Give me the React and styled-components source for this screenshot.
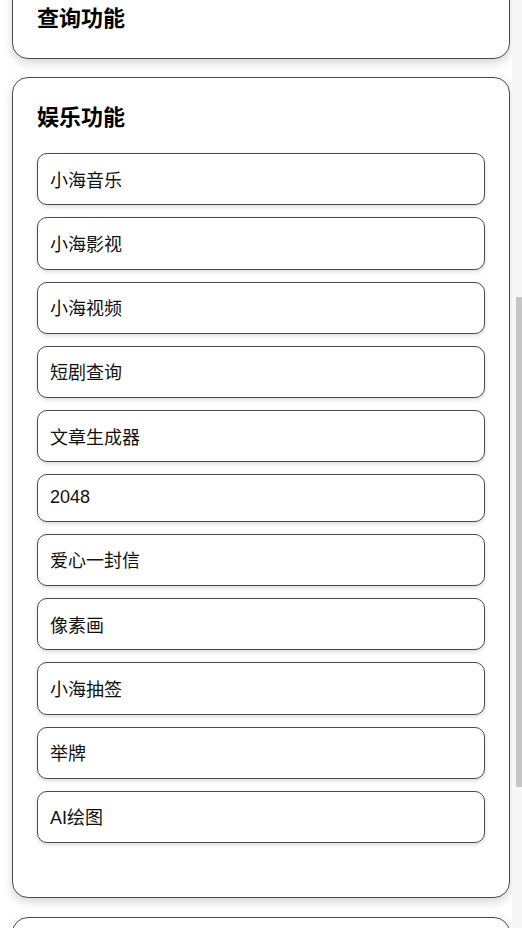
import React from "react";
import styled, { createGlobalStyle } from "styled-components";

const GlobalStyle = createGlobalStyle`
  html, body {
    margin: 0;
    padding: 0;
    background: #ffffff;
    overflow: hidden;
  }
  body {
    font-family: "Liberation Sans", "Noto Sans CJK SC", sans-serif;
    color: #111111;
  }
`;

const Viewport = styled.div`
  position: relative;
  width: 522px;
  height: 928px;
  overflow: hidden;
`;

const Page = styled.main`
  display: flex;
  flex-direction: column;
  gap: 18.5px;
  padding: 0 12px;
  margin-top: -22px;
`;

const Card = styled.section`
  background: #ffffff;
  border: 1px solid #4a4a4a;
  border-radius: 16px;
  padding: 25px 24px ${(p) => (p.$list ? "54px" : "23.5px")};
  box-shadow: 0 4px 10px rgba(0, 0, 0, 0.16);
`;

const Title = styled.h2`
  margin: 0 0 ${(p) => (p.$list ? "20px" : "0")};
  font-size: 22px;
  line-height: 30px;
  font-weight: 700;
  color: #000000;
`;

const List = styled.div`
  display: flex;
  flex-direction: column;
  gap: 12px;
`;

const Item = styled.button`
  display: block;
  width: 100%;
  text-align: left;
  font-family: "Liberation Sans", "Noto Sans CJK SC", sans-serif;
  font-size: 18px;
  line-height: normal;
  color: #111111;
  background: #ffffff;
  border: 1px solid #4a4a4a;
  border-radius: 10px;
  padding: 11.6px 12px 12.7px;
  box-shadow: 0 2px 4px rgba(0, 0, 0, 0.14);
  cursor: pointer;
`;

const ScrollTrack = styled.div`
  position: absolute;
  top: 0;
  right: 0;
  width: 10px;
  height: 100%;
  background: #f7f7f7;
`;

const ScrollThumb = styled.div`
  position: absolute;
  right: 0;
  width: 6px;
  top: 297px;
  height: 490px;
  background: #c6c6c6;
`;

const items = [
  "小海音乐",
  "小海影视",
  "小海视频",
  "短剧查询",
  "文章生成器",
  "2048",
  "爱心一封信",
  "像素画",
  "小海抽签",
  "举牌",
  "AI绘图",
];

export default function App() {
  return (
    <>
      <GlobalStyle />
      <Viewport>
        <Page>
          <Card>
            <Title>查询功能</Title>
          </Card>
          <Card $list>
            <Title $list>娱乐功能</Title>
            <List>
              {items.map((t) => (
                <Item key={t}>{t}</Item>
              ))}
            </List>
          </Card>
          <Card>
            <Title>工具功能</Title>
          </Card>
        </Page>
        <ScrollTrack>
          <ScrollThumb />
        </ScrollTrack>
      </Viewport>
    </>
  );
}
